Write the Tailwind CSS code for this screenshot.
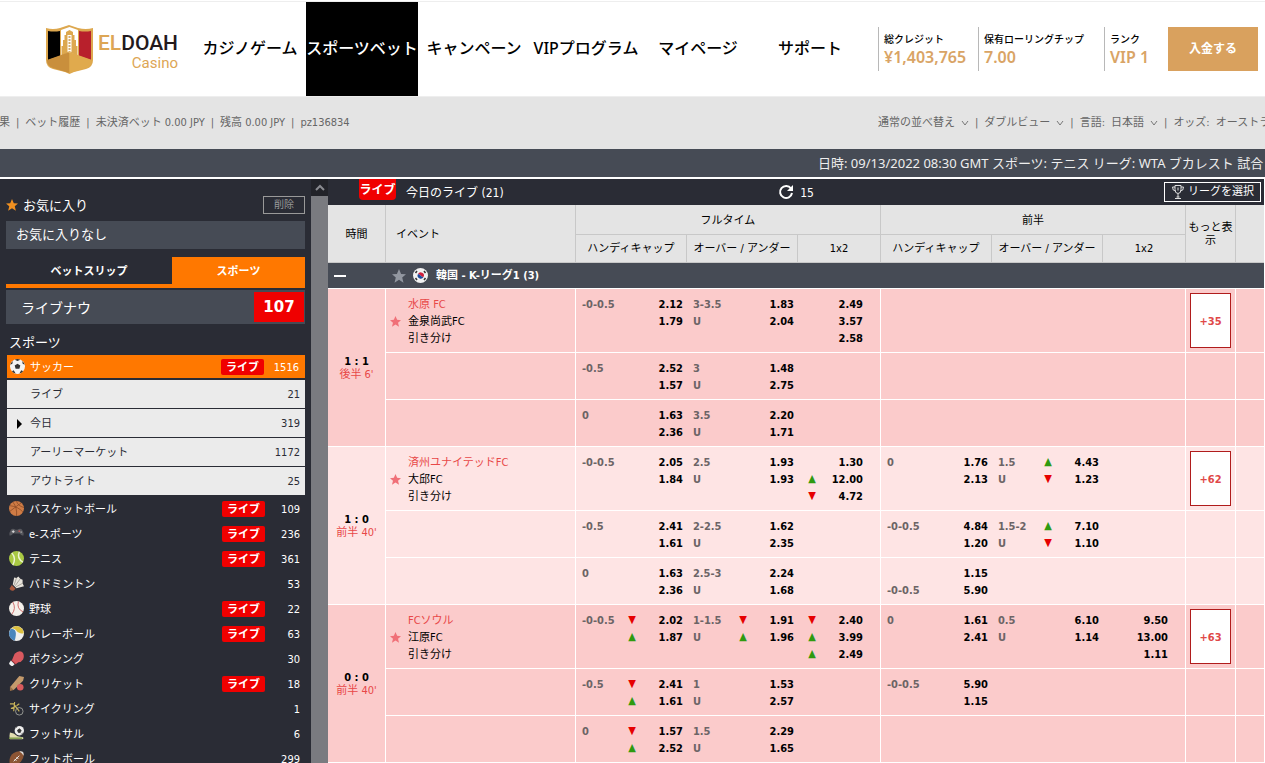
<!DOCTYPE html>
<html lang="ja">
<head>
<meta charset="utf-8">
<meta name="viewport" content="width=device-width, initial-scale=1">
<title>ELDOAH Casino</title>
<script src="https://cdn.jsdelivr.net/npm/@tailwindcss/browser@4"></script>
</head>
<body class="flex h-screen flex-col overflow-hidden bg-white text-[11px] leading-4 text-black font-['DejaVu_Sans_Condensed','Noto_Sans_CJK_JP',sans-serif]">

<header class="mt-px flex h-24 shrink-0 items-center border-y border-[#eeeeee] bg-white font-['Noto_Sans','Noto_Sans_CJK_JP',sans-serif]">
  <a href="#" class="flex w-[194px] shrink-0 items-center pl-[45px]" aria-label="ELDOAH Casino">
    <svg class="h-[50px] w-[49px] shrink-0" viewBox="0 0 49 50">
      <path d="M1 4 Q8 6 15 4 L24 1 L33 4 Q41 6 48 4 L48 36 Q48 43 41 45 L29 48 L24.500 50 L20 48 L8 45 Q1 43 1 36Z" fill="#dda84f"/>
      <path d="M3 7 Q9 8 15 7 V32 L3 36Z" fill="#000"/>
      <path d="M46 7 Q40 8 34 7 V32 L46 36Z" fill="#b8202c"/>
      <path d="M16 6 L24.500 3 L33 6 V32 L24.500 29 L16 32Z" fill="#fff"/>
      <path d="M21 8 L24.500 6 L28 8 V11 H29.500 V16 H31 V22 H32.500 V32 L24.500 28 L16.500 32 V22 H18 V16 H19.500 V11 H21Z" fill="#dda84f"/>
      <path d="M22.500 11 H26.500 V28 L24.500 27 L22.500 28Z" fill="#fff"/>
      <path d="M23.500 13h2M23.500 16h2M23.500 19h2M23.500 22h2M23.500 25h2" stroke="#c8923e" stroke-width="1.500"/>
      <path d="M2 36 L24.500 28 V49 L8 44 Q2 42 2 36Z" fill="#c98f3c"/>
      <path d="M47 36 L24.500 28 V49 L41 44 Q47 42 47 36Z" fill="#e0aa4d"/>
    </svg>
    <span class="ml-1 flex flex-col pt-1 font-['Roboto',sans-serif]">
      <span class="text-[21px] font-medium leading-6 text-[#231a1c]"><span class="text-[#dda655]">EL</span>DOAH</span>
      <span class="text-right text-[15px] leading-4 text-[#dda655]">Casino</span>
    </span>
  </a>
  <nav class="flex h-full text-base font-medium whitespace-nowrap">
    <a href="#" class="flex w-28 items-center justify-center pb-0.5">カジノゲーム</a>
    <a href="#" class="flex w-28 items-center justify-center bg-black pb-0.5 text-white">スポーツベット</a>
    <a href="#" class="flex w-28 items-center justify-center pb-0.5">キャンペーン</a>
    <a href="#" class="flex w-28 items-center justify-center pb-0.5">VIPプログラム</a>
    <a href="#" class="flex w-28 items-center justify-center pb-0.5">マイページ</a>
    <a href="#" class="flex w-28 items-center justify-center pb-0.5">サポート</a>
  </nav>
  <dl class="ml-auto flex text-[10px] font-medium whitespace-nowrap">
    <div class="h-11 w-[100px] border-l border-[#b8b8b8] pl-[5px] pt-1"><dt class="leading-4">総クレジット</dt><dd class="text-base font-semibold leading-5 text-[#d9a465]">¥1,403,765</dd></div>
    <div class="h-11 w-[126px] border-l border-[#b8b8b8] pl-[5px] pt-1"><dt class="leading-4">保有ローリングチップ</dt><dd class="text-base font-semibold leading-5 text-[#d9a465]">7.00</dd></div>
    <div class="h-11 w-16 border-l border-[#b8b8b8] pl-[5px] pt-1"><dt class="leading-4">ランク</dt><dd class="text-base font-semibold leading-5 text-[#d9a465]">VIP 1</dd></div>
  </dl>
  <button type="button" class="mr-[7px] h-11 w-[90px] shrink-0 bg-[#d9a15e] text-xs font-bold text-white">入金する</button>
</header>

<div class="flex h-[52px] shrink-0 items-center justify-between overflow-hidden bg-[#e4e4e4] whitespace-nowrap text-[#666666]">
  <nav class="-ml-px flex items-center gap-1.5">
    <a href="#">果</a><span>|</span><a href="#">ベット履歴</a><span>|</span><a href="#">未決済ベット 0.00 JPY</a><span>|</span><a href="#">残高 0.00 JPY</a><span>|</span><a href="#">pz136834</a>
  </nav>
  <div class="flex w-[387px] items-center gap-1.5 overflow-hidden">
    <span class="flex shrink-0 items-center gap-1.5"><select aria-label="並べ替え" class="appearance-none"><option>通常の並べ替え</option></select><svg class="h-2 w-2" viewBox="0 0 8 8" fill="none" stroke="#777"><path d="M1 2l3 4 3-4"/></svg></span><span>|</span>
    <span class="flex shrink-0 items-center gap-1.5"><select aria-label="表示" class="appearance-none"><option>ダブルビュー</option></select><svg class="h-2 w-2" viewBox="0 0 8 8" fill="none" stroke="#777"><path d="M1 2l3 4 3-4"/></svg></span><span>|</span>
    <span class="flex shrink-0 items-center gap-1.5"><label for="lang">言語:</label><select id="lang" class="appearance-none"><option>日本語</option></select><svg class="h-2 w-2" viewBox="0 0 8 8" fill="none" stroke="#777"><path d="M1 2l3 4 3-4"/></svg></span><span>|</span>
    <span class="flex shrink-0 items-center gap-1.5"><label for="odds">オッズ:</label><select id="odds" class="appearance-none"><option>オーストラリア</option></select></span>
  </div>
</div>

<div class="flex h-7 shrink-0 items-center justify-end overflow-hidden bg-[#464b55]">
  <p class="w-[447px] overflow-hidden text-[13px] leading-5 whitespace-nowrap text-[#eeeeee] font-['Noto_Sans','Noto_Sans_CJK_JP',sans-serif]">日時: 09/13/2022 08:30 GMT スポーツ: テニス リーグ: WTA ブカレスト 試合</p>
</div>

<main class="mt-0.5 flex min-h-0 flex-1">
  <aside class="w-[311px] shrink-0 overflow-hidden bg-[#2a2c35] px-1.5 pt-4 text-white">
    <div class="flex h-5 items-center">
      <svg class="h-3 w-3" viewBox="0 0 24 24" fill="#f09020"><path d="M12 0l3.600 8.400 8.400.600-6.500 5.500 2.200 9L12 18.500 4.300 23.500l2.200-9L0 9l8.400-.600z"/></svg>
      <h2 class="ml-[5px] pt-0.5 text-[13px]">お気に入り</h2>
      <button type="button" class="ml-auto h-[18px] w-[42px] border border-[#999] text-[10px] leading-4 text-[#999]">削除</button>
    </div>
    <p class="mt-1.5 h-7 bg-[#464b55] pl-2.5 text-[13px] leading-7">お気に入りなし</p>
    <div class="mt-2 flex h-[31px] text-[11px] font-bold">
      <button type="button" class="w-[166px] border-b-4 border-[#ff7800] pt-0.5">ベットスリップ</button>
      <button type="button" class="flex-1 bg-[#ff7800] pb-0.5">スポーツ</button>
    </div>
    <a href="#" class="mt-0.5 flex h-[34px] items-center bg-[#464b55] pl-[15px] pr-px text-sm"><span class="pt-0.5">ライブナウ</span><span class="ml-auto h-[30px] w-[50px] bg-[#f00000] text-center text-[15px] font-bold leading-[31px] font-['DejaVu_Sans',sans-serif]">107</span></a>
    <h2 class="mt-[11px] mb-1 pl-[3px] text-[13px] leading-4">スポーツ</h2>
    <div id="sports" class="pl-px"></div>
  </aside>

  <div class="w-[17px] shrink-0 bg-[#7a7b80]"><div class="flex h-[17px] items-center justify-center bg-[#222329]"><svg class="h-2 w-2.5" viewBox="0 0 10 8" fill="none" stroke="#8a8b90" stroke-width="2"><path d="M1 6l4-4 4 4"/></svg></div></div>

  <section class="mr-px min-w-0 flex-1 overflow-hidden">
    <div class="flex h-[26px] bg-[#2a2c35] text-xs text-white">
      <div class="flex flex-1"><span class="ml-[31px] h-[21px] w-[37px] rounded-b-sm bg-[#f00000] text-center font-bold leading-[22px]">ライブ</span><h1 class="ml-[10px] leading-7">今日のライブ (21)</h1></div>
      <button type="button" class="flex items-center gap-1.5" aria-label="更新"><svg class="h-4 w-4" viewBox="0 0 16 16"><path d="M13 4.500A6 6 0 1 0 14 9" fill="none" stroke="#fff" stroke-width="2"/><path d="M15 1v6H9z" fill="#fff"/></svg><span class="pt-0.5">15</span></button>
      <div class="flex flex-1 items-center justify-end"><button type="button" class="mr-[3px] flex h-5 items-center gap-1 border border-white pl-[7px] pr-1.5 text-[11px]"><svg class="h-3.5 w-3" viewBox="0 0 12 14" fill="none" stroke="#ddd"><path d="M3 .5h6v4q0 4-3 4t-3-4zM3 2H.5q0 4 3 4M9 2h2.500q0 4-3 4M6 8.500v4M3 13.500h6M4.500 12h3M6 2.500v3"/></svg>リーグを選択</button></div>
    </div>
    <table class="w-full table-fixed border-separate border-spacing-0">
      <colgroup><col class="w-[58px]"><col><col class="w-[111px]"><col class="w-[111px]"><col class="w-[83px]"><col class="w-[111px]"><col class="w-[111px]"><col class="w-[83px]"><col class="w-[50px]"><col class="w-[28px]"></colgroup>
      <thead class="bg-[#e4e4e4]">
        <tr class="h-[30px]">
          <th rowspan="2" class="border-r border-b border-[#c8c8c8] p-0 pt-0.5 font-normal">時間</th>
          <th rowspan="2" class="border-r border-b border-[#c8c8c8] p-0 pt-0.5 pl-2.5 text-left font-normal">イベント</th>
          <th colspan="3" class="border-r border-b border-[#c8c8c8] p-0 pt-0.5 font-normal">フルタイム</th>
          <th colspan="3" class="border-r border-b border-[#c8c8c8] p-0 pt-0.5 font-normal">前半</th>
          <th rowspan="2" class="border-r border-b border-[#c8c8c8] p-0 px-0.5 leading-[13px] font-normal">もっと表示</th>
          <th rowspan="2" class="border-b border-[#c8c8c8] p-0"></th>
        </tr>
        <tr class="h-7">
          <th class="border-r border-b border-[#c8c8c8] p-0 font-normal">ハンディキャップ</th><th class="border-r border-b border-[#c8c8c8] p-0 font-normal">オーバー / アンダー</th><th class="border-r border-b border-[#c8c8c8] p-0 font-normal">1x2</th>
          <th class="border-r border-b border-[#c8c8c8] p-0 font-normal">ハンディキャップ</th><th class="border-r border-b border-[#c8c8c8] p-0 font-normal">オーバー / アンダー</th><th class="border-r border-b border-[#c8c8c8] p-0 font-normal">1x2</th>
        </tr>
      </thead>
      <tbody>
        <tr class="h-[26px] bg-[#464b55] text-white">
          <th colspan="10" class="border-b border-white p-0 text-left font-bold">
            <div class="flex items-center">
              <button type="button" class="ml-1.5 h-0.5 w-3 bg-white" aria-label="折りたたむ"></button>
              <svg class="ml-[46px] h-3.5 w-3.5" viewBox="0 0 24 24" fill="#9297a0"><path d="M12 0l3.600 8.400 8.400.600-6.500 5.500 2.200 9L12 18.500 4.300 23.500l2.200-9L0 9l8.400-.600z"/></svg>
              <svg class="ml-[7px] h-[15px] w-[15px]" viewBox="0 0 15 15"><circle cx="7.500" cy="7.500" r="7.500" fill="#f2f2f2"/><path d="M5 6a3 3 0 0 1 5.500 3Q9 9 7.500 7.500T5 6z" fill="#d0203c"/><path d="M5 6Q6 6 7.500 7.500T10.500 9A3 3 0 0 1 5 6z" fill="#1c4a9c"/><path d="M2.500 5L4 3M11 3l1.500 2M2.500 10L4 12M11 12l1.500-2" stroke="#333" stroke-width="1.500"/></svg>
              <span class="ml-2">韓国 - K-リーグ1 (3)</span>
            </div>
          </th>
        </tr>
      </tbody>
    </table>
  </section>
</main>

<script>
const icons = {
  soccer: '<circle cx="8" cy="8" r="8" fill="#f3f3f3"/><path d="M8 5l3 2-1 3.500H6L5 7zM5 .7L8 2l3-1.300Q8-.6 5 .7zM.3 6L2.500 5 3 2Q.6 4 .3 6zM15.700 6L13.500 5 13 2Q15.400 4 15.700 6zM2 13l2-1 2 3.500Q3.500 15 2 13zM14 13l-2-1-2 3.500Q12.500 15 14 13z" fill="#333"/>',
  basket: '<circle cx="8" cy="8" r="8" fill="#cf7c45"/><path d="M1 5Q10 6 15 12M4 1Q9 7 8 16M13 2Q6 7 1 11M8 0Q9 5 16 7" fill="none" stroke="#8a4a25" stroke-width=".8"/>',
  pad: '<path d="M2 4q2-2 5 0h2q3-2 5 0 2 3 1.500 6-2 1-4-2H4.500q-2 3-4 2Q0 7 2 4z" fill="#55565c"/><path d="M3 6h3M4.500 4.500v3" stroke="#ddd"/><circle cx="11" cy="5.500" r="1" fill="#b55"/><circle cx="13" cy="6.500" r="1" fill="#999"/>',
  tennis: '<circle cx="8" cy="8" r="8" fill="#a9c943"/><path d="M3 2q5 6 1 13M11 .8Q8 8 15 12" fill="none" stroke="#eef5d5" stroke-width="1.500"/>',
  shuttle: '<path d="M4 9L5.500 1.500 8 2l2-1.500 2 2.500 2.500 1V8l1.500 3-8 2z" fill="#e8e4dc"/><path d="M5.500 9.500L8 2M6.500 10.500L12 3M7.500 11.500L15 7.500" stroke="#8c8880" stroke-width=".7"/><path d="M3 9.500l4 4-2 2q-3 1-4.500-2z" fill="#a8583c"/>',
  baseball: '<circle cx="8" cy="8" r="8" fill="#f4f0ea"/><path d="M4 1q4 7-1 13M10 .5q-2 8 5 11" fill="none" stroke="#c66" />',
  volley: '<circle cx="8" cy="8" r="8" fill="#f0f0ee"/><path d="M2 3Q8-3 14 3q2 3 1.500 5Q10 8 8 5T2 3z" fill="#dcc040"/><path d="M2 3q4 0 5 3t-1 9.700Q1 14 .1 9 0 6 2 3z" fill="#4a86bd"/>',
  boxing: '<path d="M6 3q4-4 8-2 3 3 1 8-2 3-5 3l-3 2-4-4z" fill="#d9595f"/><path d="M2 10l4 4-2 2q-3 0-4-3z" fill="#eee"/><path d="M2.500 9.500l4.500 4.500" stroke="#b03038"/>',
  cricket: '<path d="M11 0l5 1-1 4L5 15q-3 0-4-3z" fill="#c49a6c"/><path d="M1 11l4 4-4 1z" fill="#9a7048"/><circle cx="12" cy="12" r="3.500" fill="#d85a5c"/>',
  cycle: '<circle cx="11" cy="11" r="4" fill="none" stroke="#9a9c98"/><path d="M1 3h4l6 8M2 8l5-2M8 5l3-2M6 1L5 11" fill="none" stroke="#c8b45a" stroke-width="1.200"/>',
  futsal: '<circle cx="11" cy="5" r="5" fill="#eee"/><path d="M11 3l2 1.500-1 2.500H10L9 4.500zM7 2l2-1.500M15 7l-2 2" fill="#333" stroke="#333" stroke-width=".8"/><path d="M1 7l4 1 4 3 6 1q1 2-1 2H1q-1-3 0-7z" fill="#e2ddb0"/><path d="M0 13h14" stroke="#7c9a48" stroke-width="1.500"/>',
  football: '<path d="M1 15Q-1 6 5 2 10-1 15 1q2 5-2 10-5 5-12 4z" fill="#8c5534"/><path d="M5 11l6-6M6 8.500l2 2M8 6.500l2 2" stroke="#eee"/><path d="M11 .5Q13 0 15 1q1 2 .5 4Q14 2 11 .5z" fill="#ddd"/>'
};
const icon = k => `<svg class="h-[15px] w-[15px] shrink-0" viewBox="0 0 16 16">${icons[k]}</svg>`;
const badge = '<span class="ml-auto h-4 w-[43px] rounded-xs bg-[#f00000] text-center font-bold leading-[17px] text-white">ライブ</span>';
let side = `<a href="#" class="flex h-[23px] items-center bg-[#ff7800] pl-[3px] pr-1.5">${icon('soccer')}<span class="ml-[5px] pt-0.5">サッカー</span>${badge}<span class="w-[35px] pt-0.5 text-right">1516</span></a><div class="mt-0.5 mb-px flex flex-col gap-px text-[#2a2c35]">`;
for (const [n, c, on] of [['ライブ', 21], ['今日', 319, 1], ['アーリーマーケット', 1172], ['アウトライト', 25]])
  side += `<a href="#" class="flex h-7 items-center bg-[#ebebeb] pt-0.5 pr-[5px]"><span class="flex w-[23px] justify-end pr-2">${on ? '<svg class="h-2.5 w-[5px]" viewBox="0 0 5 10"><path d="M0 0l5 5-5 5z"/></svg>' : ''}</span><span>${n}</span><span class="ml-auto">${c}</span></a>`;
side += '</div>';
for (const [k, n, c, live] of [['basket','バスケットボール',109,1],['pad','e-スポーツ',236,1],['tennis','テニス',361,1],['shuttle','バドミントン',53],['baseball','野球',22,1],['volley','バレーボール',63,1],['boxing','ボクシング',30],['cricket','クリケット',18,1],['cycle','サイクリング',1],['futsal','フットサル',6],['football','フットボール',299]])
  side += `<a href="#" class="flex h-[25px] items-center pl-0.5 pr-[5px]">${icon(k)}<span class="ml-[5px] pt-0.5">${n}</span>${live ? badge + '<span class="w-[35px] pt-0.5 text-right">' + c + '</span>' : '<span class="ml-auto pt-0.5">' + c + '</span>'}</a>`;
document.getElementById('sports').innerHTML = side;

// Each line is "label,trend,odds"; trend is u (up), d (down) or empty.
const matches = [
  { bg: 0, score: '1 : 1', time: "後半 6'", teams: ['水原 FC', '金泉尚武FC'], more: '+35', rows: [
    [['-0-0.5,,2.12', ',,1.79'], ['3-3.5,,1.83', 'U,,2.04'], [',,2.49', ',,3.57', ',,2.58'], [], [], []],
    [['-0.5,,2.52', ',,1.57'], ['3,,1.48', 'U,,2.75'], [], [], [], []],
    [['0,,1.63', ',,2.36'], ['3.5,,2.20', 'U,,1.71'], [], [], [], []]] },
  { bg: 1, score: '1 : 0', time: "前半 40'", teams: ['済州ユナイテッドFC', '大邱FC'], more: '+62', rows: [
    [['-0-0.5,,2.05', ',,1.84'], ['2.5,,1.93', 'U,,1.93'], [',,1.30', ',u,12.00', ',d,4.72'], ['0,,1.76', ',,2.13'], ['1.5,u,4.43', 'U,d,1.23'], []],
    [['-0.5,,2.41', ',,1.61'], ['2-2.5,,1.62', 'U,,2.35'], [], ['-0-0.5,,4.84', ',,1.20'], ['1.5-2,u,7.10', 'U,d,1.10'], []],
    [['0,,1.63', ',,2.36'], ['2.5-3,,2.24', 'U,,1.68'], [], [',,1.15', '-0-0.5,,5.90'], [], []]] },
  { bg: 0, score: '0 : 0', time: "前半 40'", teams: ['FCソウル', '江原FC'], more: '+63', rows: [
    [['-0-0.5,d,2.02', ',u,1.87'], ['1-1.5,d,1.91', 'U,u,1.96'], [',d,2.40', ',u,3.99', ',u,2.49'], ['0,,1.61', ',,2.41'], ['0.5,,6.10', 'U,,1.14'], [',,9.50', ',,13.00', ',,1.11']],
    [['-0.5,d,2.41', ',u,1.61'], ['1,,1.53', 'U,,2.57'], [], ['-0-0.5,,5.90', ',,1.15'], [], []],
    [['0,d,1.57', ',u,2.52'], ['1.5,,2.29', 'U,,1.65'], [], [], [], []]] }
];
const trend = { u: '<span class="w-3 text-center text-[11px] leading-4 text-[#2f9a10]">▲</span>', d: '<span class="w-3 text-center text-[11px] leading-4 text-[#e60000]">▼</span>', '': '<span class="w-3"></span>' };
const odds = (lines, i) => {
  const x12 = i % 3 === 2;
  const body = lines.map(l => { const [a, t, o] = l.split(',');
    return `<div class="flex h-[17px] leading-[17px]">${x12 ? '' : '<span class="w-11 text-[#6c6466] whitespace-nowrap">' + a + '</span>'}${trend[t]}<a href="#" class="ml-auto text-black">${o}</a></div>`; }).join('');
  return `<td class="${x12 ? 'border-r border-b border-white p-0 pt-[7px] pb-[5px] pl-2 pr-[17px] align-top font-bold' : 'border-b border-white p-0 pt-[7px] pb-[5px] pl-1.5 pr-1 align-top font-bold'}">${body}</td>`;
};
const star = '<svg class="h-[11px] w-[11px]" viewBox="0 0 24 24" fill="#f07078"><path d="M12 0l3.600 8.400 8.400.600-6.500 5.500 2.200 9L12 18.500 4.300 23.500l2.200-9L0 9l8.400-.600z"/></svg>';
let out = '';
for (const m of matches) m.rows.forEach((r, i) => {
  out += `<tr class="${m.bg ? 'h-[47px] bg-[#fee4e4]' : 'h-[47px] bg-[#fbcbcb]'}">`;
  if (!i) out += `<td rowspan="3" class="border-r border-b border-white p-0 text-center leading-[13px]"><b>${m.score}</b><br><span class="text-[#e84848]">${m.time}</span></td>`;
  out += '<td class="border-r border-b border-white p-0 pt-[7px] pb-[5px] align-top">' + (i ? '' : `<div class="flex items-center"><button type="button" class="ml-1 mr-[7px]" aria-label="お気に入りに追加">${star}</button><div class="leading-[17px]"><div class="text-[#e84848]">${m.teams[0]}</div><div>${m.teams[1]}</div><div>引き分け</div></div></div>`) + '</td>';
  out += r.map(odds).join('');
  out += `<td class="border-r border-b border-white p-0 pt-1 pl-1 align-top">${i ? '' : '<button type="button" class="block h-[55px] w-[41px] border border-[#b01c1c] bg-white pt-0.5 font-bold text-[#e04848]">' + m.more + '</button>'}</td><td class="border-b border-white p-0"></td></tr>`;
});
document.querySelector('tbody').insertAdjacentHTML('beforeend', out);
</script>
</body>
</html>
